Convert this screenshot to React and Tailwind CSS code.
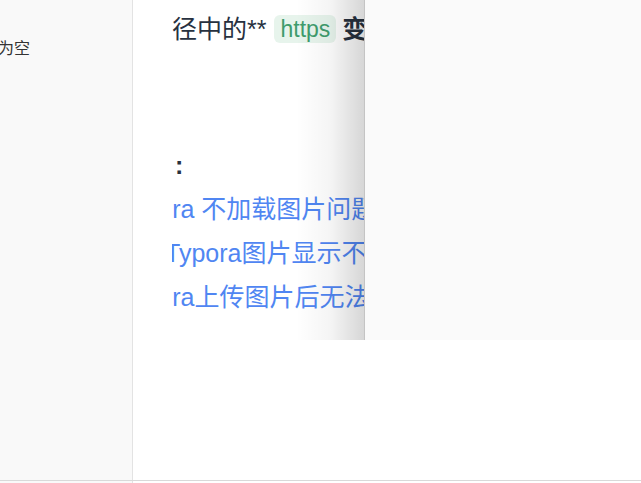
import React from "react";

const links = [
  { text: "Typora 不加载图片问题", shift: "-ml-[54px]" },
  { text: "Typora图片显示不出来", shift: "-ml-[7px]" },
  { text: "Typora上传图片后无法显示", shift: "-ml-[54px]" },
];

const font = "font-['Liberation_Sans','Noto_Sans_CJK_SC',sans-serif]";

const App = () => {
  return (
    <div className={`relative w-[641px] h-[483px] overflow-hidden bg-white ${font}`}>
      <div className="flex h-[480px]">
        {/* sidebar */}
        <div className="w-[133px] shrink-0 border-r border-[#e3e3e3] bg-[#f9f9f9] overflow-hidden">
          <p className="mt-[39px] -ml-[2px] text-[16px] leading-[20px] text-[#333] whitespace-nowrap">
            为空
          </p>
        </div>

        {/* article */}
        <div className="flex-1 bg-white">
          <div className="ml-[39px] pt-[7px] overflow-hidden text-[25px] leading-[44px] text-[#27313f]">
            <p className="flex items-center whitespace-nowrap">
              <span>径中的**</span>
              <code className={`ml-[8px] px-[6px] h-[28px] flex items-center rounded-md bg-[#e7f4ec] text-[#3f9c6d] text-[23px] ${font}`}>
                https
              </code>
              <strong className="ml-[6px] font-bold">变为</strong>
            </p>
            <p className="mt-[92px] ml-[3px] font-bold whitespace-nowrap">:</p>
            {links.map((l) => (
              <p key={l.text} className={`whitespace-nowrap text-[#5086f2] ${l.shift}`}>
                {l.text}
              </p>
            ))}
          </div>
        </div>
      </div>

      <div className="h-px bg-[#d9d9d9]" />
      <div className="flex h-[2px]">
        <div className="w-[133px] shrink-0 border-r border-[#e3e3e3] bg-[#f9f9f9]" />
        <div className="flex-1 bg-white" />
      </div>

      {/* shadow + overlay panel */}
      <div className="absolute left-[296px] top-0 h-[340px] w-[68px] bg-gradient-to-r from-white/0 via-black/[0.04] to-black/[0.16]" />
      <div className="absolute left-[364px] top-0 h-[340px] w-[277px] border-l border-[#c4c4c4] bg-[#fafafa]" />
    </div>
  );
};

export default App;
